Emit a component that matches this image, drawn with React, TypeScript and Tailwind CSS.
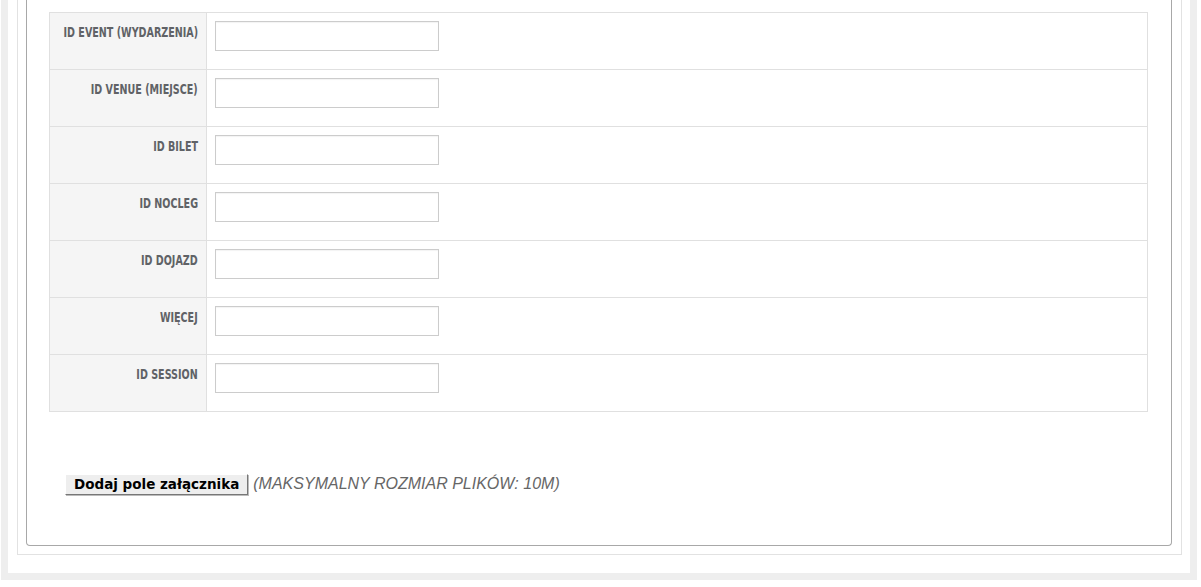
const rows = [
  'ID EVENT (WYDARZENIA)',
  'ID VENUE (MIEJSCE)',
  'ID BILET',
  'ID NOCLEG',
  'ID DOJAZD',
  'WIĘCEJ',
  'ID SESSION',
];

function FieldRow({ label, first }: { label: string; first: boolean }) {
  return (
    <div className={`flex ${first ? 'h-[56px]' : 'h-[57px] border-t border-[#e0e0e0]'}`}>
      <div className="flex justify-end items-start w-[157px] shrink-0 bg-[#f5f5f5] border-r border-[#e0e0e0] pr-[8px] pt-[11px]">
        <span className="shrink-0 origin-right scale-x-[0.76] whitespace-nowrap font-['DejaVu_Sans_Condensed','DejaVu_Sans',sans-serif] text-[14px] font-bold leading-[16px] text-[#606266]">
          {label}
        </span>
      </div>
      <div className="flex-1 pl-[8px] pt-[8px]">
        <input
          type="text"
          className="block w-[224px] h-[30px] border border-[#cccccc] bg-white shadow-[inset_0_1px_1px_rgba(0,0,0,0.05)] outline-none"
        />
      </div>
    </div>
  );
}

export default function App() {
  return (
    <div className="w-full h-[587px] bg-white">
      <div className="ml-[1px] w-[1196px] bg-[#eeeeee] px-[7px] pb-[7px]">
        <div className="bg-white pl-[9px] pr-[8px] pb-[18px]">
          <div className="border-x border-b border-[#e2e2e2] pl-[8px] pr-[9px] pb-[8px]">
            <div className="border-x border-b border-[#a8a8a8] rounded-b-[4px] pl-[22px] pr-[23px] pt-[12px] h-[546px]">
              <div className="border border-[#e0e0e0]">
                {rows.map((r, i) => (
                  <FieldRow key={r} label={r} first={i === 0} />
                ))}
              </div>
              <div className="flex items-center mt-[60px] ml-[16px]">
                <button className="h-[21px] px-[8px] bg-[#eeeeee] border border-t-white border-l-white border-r-[#777] border-b-[#777] shadow-[1px_1px_0_#bbb] font-['DejaVu_Sans',sans-serif] text-[13.5px] font-bold leading-[17px] text-black">
                  Dodaj pole załącznika
                </button>
                <span className="ml-[5px] font-['Liberation_Sans',Arial,sans-serif] italic text-[16px] text-[#666666]">
                  (MAKSYMALNY ROZMIAR PLIKÓW: 10M)
                </span>
              </div>
            </div>
          </div>
        </div>
      </div>
    </div>
  );
}
